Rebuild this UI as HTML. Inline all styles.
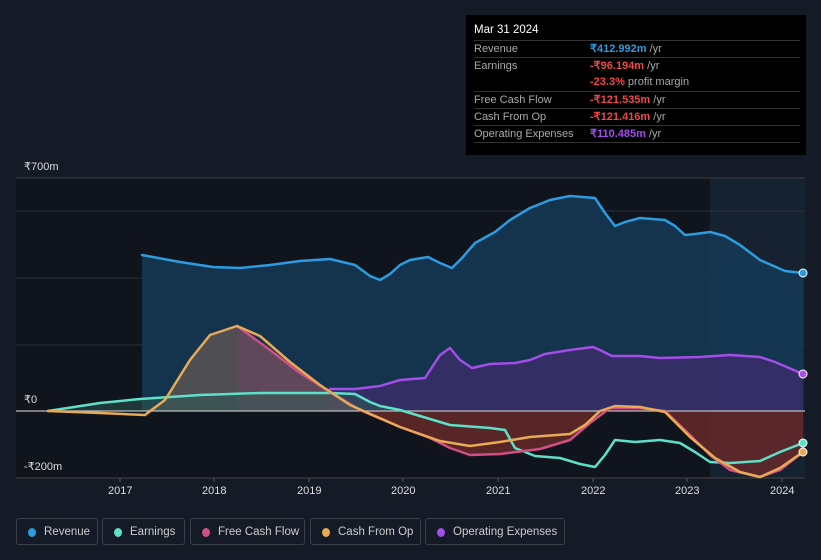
<!DOCTYPE html>
<html><head><meta charset="utf-8"><style>
body{margin:0;width:821px;height:560px;background:#151b26;font-family:"Liberation Sans",sans-serif;overflow:hidden;position:relative}
.tip{position:absolute;left:466px;top:15px;width:340px;height:140px;background:#000;color:#ddd;font-size:11px}
.tip .h{position:absolute;left:8px;top:9px;color:#fff;font-size:11.5px}
.row{position:absolute;left:8px;width:326px;border-top:1px solid #333;height:17px;line-height:17px}
.row span.l{color:#aaa;position:absolute;left:0}
.row span.v{position:absolute;left:116px;font-weight:bold}
.u{color:#aaa;font-weight:normal}
.leg{position:absolute;top:518px;height:27px;border:1px solid #3a3f4a;border-radius:3px;color:#ccc;font-size:11.5px;line-height:27px;box-sizing:border-box;padding-left:27px}
.leg i{position:absolute;left:11px;top:9px;width:8px;height:9px;border-radius:50%}
.ax{position:absolute;color:#ddd;font-size:11px}
</style></head><body>
<svg width="821" height="560" style="position:absolute;left:0;top:0">
<rect x="16" y="178" width="789" height="300" fill="#141922"/>
<rect x="16" y="178" width="694" height="300" fill="#10141c"/>
<rect x="710" y="178" width="95" height="300" fill="#16222f"/>
<g stroke="#2a303a" stroke-width="1">
<line x1="16" y1="178" x2="805" y2="178" stroke="#3a3f48"/><line x1="16" y1="211" x2="805" y2="211"/><line x1="16" y1="278" x2="805" y2="278"/><line x1="16" y1="345" x2="805" y2="345"/><line x1="16" y1="478" x2="805" y2="478" stroke="#444"/>
</g>
<polygon fill="#153a56" fill-opacity="0.85" points="142,411 142,255 180,262 213,267 240,268 270,265 300,261 330,259 355,265 370,276 380,280 390,274 400,265 410,260 428,257 440,263 452,268 462,258 475,243 495,232 510,220 530,208 550,200 570,196 595,198 605,213 615,226 625,222 640,218 665,220 675,226 685,235 695,234 710,232 725,236 740,245 760,260 785,271 803,273 803,411"/>
<polygon fill="#3b2d6a" fill-opacity="0.8" points="330,411 330,389 355,389 380,386 400,380 425,378 440,355 450,348 460,360 472,368 490,364 515,363 530,360 545,354 570,350 593,347 600,350 612,356 640,356 660,358 700,357 730,355 760,357 775,362 803,374 803,411"/>
<polygon fill="#6b2a2a" fill-opacity="0.8" points="330,411 360,410 400,427 430,438 450,448 470,455 500,454 540,449 570,440 590,423 610,408 640,408 665,411 690,435 710,455 730,470 760,477 780,470 803,452 803,411"/>
<polygon fill="#8a6a5a" fill-opacity="0.5" points="145,411 165,400 190,360 210,335 237,326 237,411"/>
<polygon fill="#9a5a66" fill-opacity="0.55" points="237,411 237,326 270,350 300,373 330,392 360,411"/>
<polygon fill="#2d5a55" fill-opacity="0.5" points="48,411 100,403 140,399 200,395 260,393 330,393 355,394 370,402 380,406 400,411"/>
<line x1="16" y1="411" x2="805" y2="411" stroke="#bbb" stroke-width="1.2"/>
<g fill="none" stroke-width="2.5" stroke-linejoin="round" stroke-linecap="round">
<polyline stroke="#2d9be0" points="142,255 180,262 213,267 240,268 270,265 300,261 330,259 355,265 370,276 380,280 390,274 400,265 410,260 428,257 440,263 452,268 462,258 475,243 495,232 510,220 530,208 550,200 570,196 595,198 605,213 615,226 625,222 640,218 665,220 675,226 685,235 695,234 710,232 725,236 740,245 760,260 785,271 803,273"/>
<polyline stroke="#a34ee8" points="330,389 355,389 380,386 400,380 425,378 440,355 450,348 460,360 472,368 490,364 515,363 530,360 545,354 570,350 593,347 600,350 612,356 640,356 660,358 700,357 730,355 760,357 775,362 803,374"/>
<polyline stroke="#5ee0c8" points="48,411 100,403 140,399 200,395 260,393 330,393 355,394 370,402 380,406 400,410 420,416 450,425 490,428 505,430 515,448 535,456 560,458 580,464 595,467 605,455 615,440 635,442 660,440 680,443 695,452 710,462 730,463 760,461 780,452 803,443"/>
<polyline stroke="#d14f86" points="237,326 270,350 300,373 330,392 360,410 400,427 430,438 450,448 470,455 500,454 540,449 570,440 590,423 610,408 640,408 665,411 690,435 710,455 730,470 760,477 780,470 803,452"/>
<polyline stroke="#e8ab55" points="48,411 100,413 145,415 165,400 190,360 210,335 237,326 260,336 290,362 320,385 350,405 400,427 440,441 470,446 500,442 530,437 570,434 585,425 600,411 615,406 640,407 665,412 690,437 715,458 740,472 760,477 780,468 803,452"/>
</g>
<circle cx="803" cy="273" r="4" fill="#2d9be0" stroke="#fff" stroke-width="1"/>
<circle cx="803" cy="374" r="4" fill="#a34ee8" stroke="#fff" stroke-width="1"/>
<circle cx="803" cy="443" r="4" fill="#5ee0c8" stroke="#fff" stroke-width="1"/>
<circle cx="803" cy="452" r="4" fill="#e8ab55" stroke="#fff" stroke-width="1"/>
<g stroke="#555"><line x1="120" y1="478" x2="120" y2="482"/><line x1="214" y1="478" x2="214" y2="482"/><line x1="309" y1="478" x2="309" y2="482"/><line x1="403" y1="478" x2="403" y2="482"/><line x1="498" y1="478" x2="498" y2="482"/><line x1="593" y1="478" x2="593" y2="482"/><line x1="687" y1="478" x2="687" y2="482"/><line x1="782" y1="478" x2="782" y2="482"/></g>
</svg>
<div class="ax" style="left:24px;top:160px">₹700m</div>
<div class="ax" style="left:24px;top:393px">₹0</div>
<div class="ax" style="left:24px;top:460px">-₹200m</div>
<div class="ax" style="left:108px;top:485px">2017</div>
<div class="ax" style="left:202px;top:485px">2018</div>
<div class="ax" style="left:297px;top:485px">2019</div>
<div class="ax" style="left:391px;top:485px">2020</div>
<div class="ax" style="left:486px;top:485px">2021</div>
<div class="ax" style="left:581px;top:485px">2022</div>
<div class="ax" style="left:675px;top:485px">2023</div>
<div class="ax" style="left:770px;top:485px">2024</div>
<div class="tip">
<div class="h">Mar 31 2024</div>
<div class="row" style="top:25px"><span class="l">Revenue</span><span class="v" style="color:#2d9be0">₹412.992m <span class="u">/yr</span></span></div>
<div class="row" style="top:42px"><span class="l">Earnings</span><span class="v" style="color:#f04848">-₹96.194m <span class="u">/yr</span></span></div>
<div class="row" style="top:59px;border-top:none"><span class="v" style="color:#f04848">-23.3% <span class="u">profit margin</span></span></div>
<div class="row" style="top:76px"><span class="l">Free Cash Flow</span><span class="v" style="color:#f04848">-₹121.535m <span class="u">/yr</span></span></div>
<div class="row" style="top:93px"><span class="l">Cash From Op</span><span class="v" style="color:#f04848">-₹121.416m <span class="u">/yr</span></span></div>
<div class="row" style="top:110px"><span class="l">Operating Expenses</span><span class="v" style="color:#a34ee8">₹110.485m <span class="u">/yr</span></span></div>
<div class="row" style="top:127px"></div>
</div>
<div class="leg" style="left:16px;width:82px"><i style="background:#2d9be0"></i>Revenue</div>
<div class="leg" style="left:102px;width:83px"><i style="background:#5ee0c8"></i>Earnings</div>
<div class="leg" style="left:190px;width:115px"><i style="background:#d14f86"></i>Free Cash Flow</div>
<div class="leg" style="left:310px;width:111px"><i style="background:#e8ab55"></i>Cash From Op</div>
<div class="leg" style="left:425px;width:140px"><i style="background:#a34ee8"></i>Operating Expenses</div>
</body></html>
